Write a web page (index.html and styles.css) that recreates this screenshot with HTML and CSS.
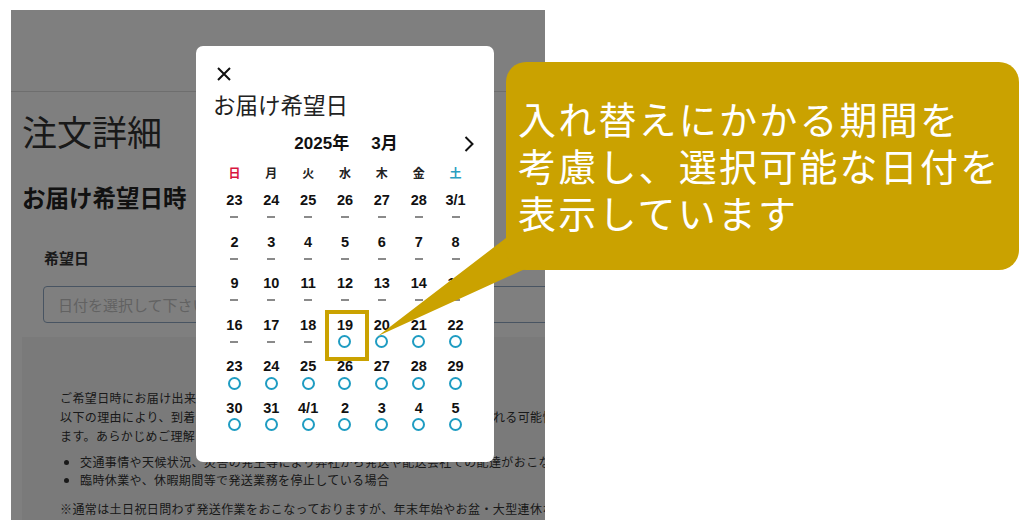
FILE: index.html
```html
<!DOCTYPE html>
<html lang="ja">
<head>
<meta charset="utf-8">
<title>お届け希望日</title>
<link rel="stylesheet" href="styles.css">
</head>
<body>
<div class="canvas">
  <div class="phone">
    <div class="page">
      <div class="topbar"></div>
      <h1 class="page-title">注文詳細</h1>
      <h2 class="section-title">お届け希望日時</h2>
      <div class="field">
        <div class="field-label">希望日</div>
        <div class="input"><span class="placeholder">日付を選択して下さい</span></div>
      </div>
      <div class="notice">
        <p class="notice-line">ご希望日時にお届け出来ない場合がございます。</p>
        <p class="notice-line">以下の理由により、到着が遅れる場合や、お届け日時がご希望に添えず変更される可能性があり</p>
        <p class="notice-line">ます。あらかじめご理解ください。</p>
        <ul class="notice-list">
          <li>交通事情や天候状況、災害の発生等により弊社から発送や配送会社での配達がおこなえない場合</li>
          <li>臨時休業や、休暇期間等で発送業務を停止している場合</li>
        </ul>
        <p class="notice-line notice-note">※通常は土日祝日問わず発送作業をおこなっておりますが、年末年始やお盆・大型連休などは</p>
      </div>
    </div>
    <div class="overlay"></div>
    <div class="modal">
      <svg class="close" width="14" height="14" viewBox="0 0 14 14"><path d="M1 1 L13 13 M13 1 L1 13" stroke="#111" stroke-width="2" fill="none"/></svg>
      <div class="modal-title">お届け希望日</div>
      <div class="calendar">
        <div class="cal-head">
          <span></span>
          <div class="cal-month"><span>2025年</span><span>3月</span></div>
          <svg class="cal-next" width="10" height="16" viewBox="0 0 10 16"><polyline points="1.5,1 8.5,8 1.5,15" stroke="#111" stroke-width="2" fill="none"/></svg>
        </div>
        <div class="weekdays">
          <span class="sun">日</span><span>月</span><span>火</span><span>水</span><span>木</span><span>金</span><span class="sat">土</span>
        </div>
        <div class="days">
          <div class="day"><span class="num">23</span><span class="mark"><i class="dash"></i></span></div>
          <div class="day"><span class="num">24</span><span class="mark"><i class="dash"></i></span></div>
          <div class="day"><span class="num">25</span><span class="mark"><i class="dash"></i></span></div>
          <div class="day"><span class="num">26</span><span class="mark"><i class="dash"></i></span></div>
          <div class="day"><span class="num">27</span><span class="mark"><i class="dash"></i></span></div>
          <div class="day"><span class="num">28</span><span class="mark"><i class="dash"></i></span></div>
          <div class="day"><span class="num">3/1</span><span class="mark"><i class="dash"></i></span></div>

          <div class="day"><span class="num">2</span><span class="mark"><i class="dash"></i></span></div>
          <div class="day"><span class="num">3</span><span class="mark"><i class="dash"></i></span></div>
          <div class="day"><span class="num">4</span><span class="mark"><i class="dash"></i></span></div>
          <div class="day"><span class="num">5</span><span class="mark"><i class="dash"></i></span></div>
          <div class="day"><span class="num">6</span><span class="mark"><i class="dash"></i></span></div>
          <div class="day"><span class="num">7</span><span class="mark"><i class="dash"></i></span></div>
          <div class="day"><span class="num">8</span><span class="mark"><i class="dash"></i></span></div>

          <div class="day"><span class="num">9</span><span class="mark"><i class="dash"></i></span></div>
          <div class="day"><span class="num">10</span><span class="mark"><i class="dash"></i></span></div>
          <div class="day"><span class="num">11</span><span class="mark"><i class="dash"></i></span></div>
          <div class="day"><span class="num">12</span><span class="mark"><i class="dash"></i></span></div>
          <div class="day"><span class="num">13</span><span class="mark"><i class="dash"></i></span></div>
          <div class="day"><span class="num">14</span><span class="mark"><i class="dash"></i></span></div>
          <div class="day"><span class="num">15</span><span class="mark"><i class="dash"></i></span></div>

          <div class="day"><span class="num">16</span><span class="mark"><i class="dash"></i></span></div>
          <div class="day"><span class="num">17</span><span class="mark"><i class="dash"></i></span></div>
          <div class="day"><span class="num">18</span><span class="mark"><i class="dash"></i></span></div>
          <div class="day"><span class="num">19</span><span class="mark"><i class="ok"></i></span></div>
          <div class="day"><span class="num">20</span><span class="mark"><i class="ok"></i></span></div>
          <div class="day"><span class="num">21</span><span class="mark"><i class="ok"></i></span></div>
          <div class="day"><span class="num">22</span><span class="mark"><i class="ok"></i></span></div>

          <div class="day"><span class="num">23</span><span class="mark"><i class="ok"></i></span></div>
          <div class="day"><span class="num">24</span><span class="mark"><i class="ok"></i></span></div>
          <div class="day"><span class="num">25</span><span class="mark"><i class="ok"></i></span></div>
          <div class="day"><span class="num">26</span><span class="mark"><i class="ok"></i></span></div>
          <div class="day"><span class="num">27</span><span class="mark"><i class="ok"></i></span></div>
          <div class="day"><span class="num">28</span><span class="mark"><i class="ok"></i></span></div>
          <div class="day"><span class="num">29</span><span class="mark"><i class="ok"></i></span></div>

          <div class="day"><span class="num">30</span><span class="mark"><i class="ok"></i></span></div>
          <div class="day"><span class="num">31</span><span class="mark"><i class="ok"></i></span></div>
          <div class="day"><span class="num">4/1</span><span class="mark"><i class="ok"></i></span></div>
          <div class="day"><span class="num">2</span><span class="mark"><i class="ok"></i></span></div>
          <div class="day"><span class="num">3</span><span class="mark"><i class="ok"></i></span></div>
          <div class="day"><span class="num">4</span><span class="mark"><i class="ok"></i></span></div>
          <div class="day"><span class="num">5</span><span class="mark"><i class="ok"></i></span></div>
        </div>
      </div>
    </div>
  </div>
  <div class="highlight"></div>
  <svg class="tail" width="200" height="120" viewBox="0 0 200 120"><polygon points="8,111 136,13 190,13 190,40 155,44" fill="#caa200"/></svg>
  <div class="bubble">
    <p class="bubble-text">入れ替えにかかる期間を<br>考慮し、選択可能な日付を<br>表示しています</p>
  </div>
</div>
</body>
</html>
```

FILE: styles.css
```css
* { box-sizing: border-box; }
html, body { margin: 0; padding: 0; background: #fff; }
body {
  font-family: "Noto Sans CJK JP", "Noto Sans", sans-serif;
  color: #333;
}
.canvas {
  position: relative;
  width: 1024px;
  height: 530px;
  padding: 10px 0 0 11px;
  overflow: hidden;
}
.phone {
  position: relative;
  width: 534px;
  height: 510px;
  overflow: hidden;
  background: #fff;
}
.page { width: 534px; }
.topbar {
  height: 82px;
  border-bottom: 1px solid #dcdcdc;
}
.page-title {
  margin: 19px 0 0;
  padding-left: 11px;
  font-size: 35px;
  line-height: 40px;
  font-weight: 400;
  color: #333;
  white-space: nowrap;
}
.section-title {
  margin: 31px 0 0;
  padding-left: 11px;
  font-size: 23.5px;
  line-height: 30px;
  font-weight: 700;
  color: #222;
  white-space: nowrap;
}
.field { margin-top: 35px; padding-left: 32px; }
.field-label {
  padding-left: 1px;
  font-size: 15px;
  line-height: 22px;
  font-weight: 700;
  color: #333;
}
.input {
  margin-top: 17px;
  width: 640px;
  height: 37px;
  border: 1px solid #90a8c4;
  border-radius: 4px;
  display: flex;
  align-items: center;
  padding-left: 14px;
}
.placeholder {
  font-size: 15px;
  color: #c4c4c4;
  white-space: nowrap;
}
.notice {
  margin: 14px 0 0 11px;
  width: 700px;
  height: 200px;
  background: #f5f5f5;
  padding: 51px 0 0 38px;
}
.notice-line {
  margin: 0;
  font-size: 12px;
  line-height: 19px;
  letter-spacing: 0.4px;
  color: #333;
  white-space: nowrap;
}
.notice-list {
  margin: 8px 0 0;
  padding-left: 20px;
  font-size: 12px;
  line-height: 18px;
  letter-spacing: 0.4px;
  color: #333;
  white-space: nowrap;
}
.notice-note { margin-top: 10px; }
.overlay {
  position: absolute;
  inset: 0;
  background: rgba(0, 0, 0, 0.5);
}
.modal {
  position: absolute;
  left: 185px;
  top: 36px;
  width: 298px;
  height: 416px;
  background: #fff;
  border-radius: 7px;
  padding: 21px 17px 0;
}
.close { display: block; margin-left: 4px; }
.modal-title {
  margin-top: 8px;
  font-size: 22.5px;
  line-height: 30px;
  color: #222;
  font-weight: 400;
}
.calendar {
  padding: 0 3px;
  font-family: "Liberation Sans", "Noto Sans CJK JP", sans-serif;
}
.cal-head {
  margin-top: 13px;
  display: grid;
  grid-template-columns: 1fr auto 1fr;
  align-items: center;
  height: 24px;
}
.cal-month {
  display: flex;
  gap: 22px;
  font-size: 17px;
  font-weight: 700;
  line-height: 24px;
  color: #111;
  padding-left: 2px;
}
.cal-next { justify-self: end; display: block; }
.weekdays {
  margin-top: 8px;
  display: grid;
  grid-template-columns: repeat(7, 1fr);
  text-align: center;
  font-family: "Noto Sans CJK JP", sans-serif;
  font-size: 12px;
  line-height: 18px;
  font-weight: 700;
  color: #222;
}
.weekdays .sun { color: #d8163f; }
.weekdays .sat { color: #2a9ec0; }
.days {
  margin-top: 9px;
  display: grid;
  grid-template-columns: repeat(7, 1fr);
  grid-auto-rows: 41.5px;
}
.day {
  display: flex;
  flex-direction: column;
  align-items: center;
}
.num {
  font-size: 14.5px;
  line-height: 18px;
  font-weight: 700;
  color: #111;
}
.mark {
  height: 16px;
  display: flex;
  align-items: center;
  justify-content: center;
}
.dash {
  width: 8px;
  height: 2px;
  background: #8a8a8a;
}
.ok {
  width: 13px;
  height: 13px;
  border: 2px solid #1f9cc2;
  border-radius: 50%;
}
.highlight {
  position: absolute;
  left: 325px;
  top: 310px;
  width: 44px;
  height: 51px;
  border: 4px solid #caa200;
}
.tail {
  position: absolute;
  left: 370px;
  top: 225px;
}
.bubble {
  position: absolute;
  left: 506px;
  top: 62px;
  width: 513px;
  height: 208px;
  background: #caa200;
  border-radius: 20px;
  display: flex;
  align-items: center;
  padding-left: 12px;
}
.bubble-text {
  margin: 0;
  margin-top: -3px;
  color: #fff;
  font-size: 38px;
  line-height: 47px;
  letter-spacing: 2.2px;
  font-weight: 400;
  white-space: nowrap;
}
```
